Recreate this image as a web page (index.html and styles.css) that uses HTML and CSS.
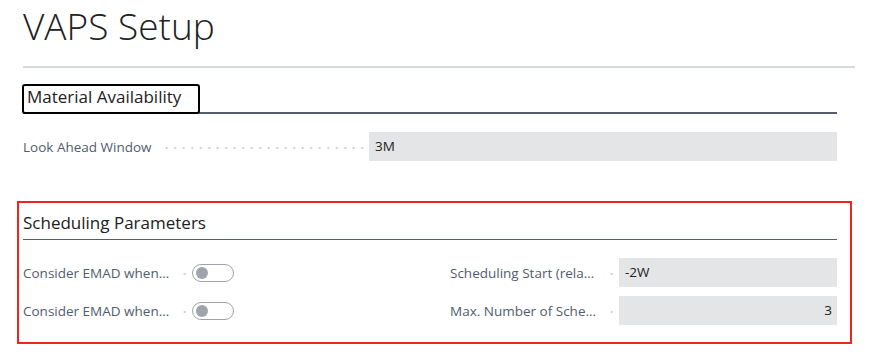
FILE: index.html
```html
<!DOCTYPE html>
<html lang="en">
<head>
  <meta charset="UTF-8" />
  <meta name="viewport" content="width=device-width, initial-scale=1.0"/>
  <title>VAPS Setup</title>
  <link rel="stylesheet" href="styles.css">
</head>
<body>

  <div class="page">
    <h1 class="page-title">VAPS Setup</h1>

    <div class="form">
      <section class="group">
        <div class="group-head thick">
          <span class="group-title focused">Material Availability</span>
        </div>
        <div class="field wide">
          <div class="caption">
            <label>Look Ahead Window</label>
            <span class="leader"></span>
          </div>
          <div class="input">3M</div>
        </div>
      </section>

      <section class="group marked">
        <div class="group-head">
          <span class="group-title">Scheduling Parameters</span>
        </div>
        <div class="cols">
          <div class="col">
            <div class="field">
              <div class="caption">
                <label>Consider EMAD when scheduling</label>
                <span class="leader"></span>
              </div>
              <div class="toggle"><span class="knob"></span></div>
            </div>
            <div class="field">
              <div class="caption">
                <label>Consider EMAD when rescheduling</label>
                <span class="leader"></span>
              </div>
              <div class="toggle"><span class="knob"></span></div>
            </div>
          </div>
          <div class="col">
            <div class="field">
              <div class="caption">
                <label>Scheduling Start (relative to today)</label>
                <span class="leader"></span>
              </div>
              <div class="input">-2W</div>
            </div>
            <div class="field">
              <div class="caption">
                <label>Max. Number of Scheduling Runs</label>
                <span class="leader"></span>
              </div>
              <div class="input number">3</div>
            </div>
          </div>
        </div>
      </section>
    </div>
  </div>

</body>
</html>
```

FILE: styles.css
```css
body {
  margin: 0;
  background-color: #ffffff;
  font-family: "Open Sans", "Noto Sans", sans-serif;
  color: #212121;
}

.page {
  padding: 0 14px 0 23px;
}

.page-title {
  margin: 0;
  font-size: 37px;
  font-weight: 300;
  line-height: 52px;
  padding-bottom: 14px;
  border-bottom: 2px solid #d6d9dd;
}

.form {
  margin-right: 18px;
  padding-top: 16px;
}

.group-head {
  display: flex;
  border-bottom: 1px solid #555d6b;
  padding-bottom: 4px;
}

.group-head.thick {
  border-bottom: 2px solid #555d6b;
  padding-bottom: 0;
}

.group-title {
  font-size: 17px;
  line-height: 24px;
  color: #212121;
}

.focused {
  line-height: 22px;
  padding: 0 17px 4px 3px;
  margin: 0 0 -2px -1px;
  border: 2px solid #000000;
  border-radius: 3px;
}

.field {
  display: flex;
  align-items: center;
  height: 29px;
  margin-top: 18px;
}

.col .field + .field {
  margin-top: 9px;
}

.caption {
  display: flex;
  align-items: center;
  width: 169px;
  flex-shrink: 0;
}

.wide .caption {
  width: 346px;
}

.caption label {
  font-size: 13.5px;
  color: #505c6d;
  white-space: nowrap;
  overflow: hidden;
  text-overflow: ellipsis;
  max-width: calc(100% - 22px);
}

.leader {
  flex: 1;
  height: 4px;
  margin: 2px 3px 0 8px;
  background-image: radial-gradient(circle, #c6cad0 0.9px, transparent 1.2px);
  background-size: 8.5px 4px;
  background-position: right center;
  background-repeat: repeat-x;
}

.input {
  flex: 1;
  height: 29px;
  line-height: 29px;
  padding: 0 6px;
  background-color: #e4e5e7;
  font-size: 13.5px;
  color: #212121;
}

.input.number {
  text-align: right;
  padding-right: 5px;
}

.toggle {
  position: relative;
  width: 40px;
  height: 16px;
  border: 1px solid #9fa3ac;
  border-radius: 9px;
}

.knob {
  position: absolute;
  left: 3px;
  top: 2px;
  width: 12px;
  height: 12px;
  border-radius: 50%;
  background-color: #a0a4ad;
}

.group.marked {
  margin: 40px -15px 0 -6px;
  padding: 8px 13px 17px 4px;
  border: 2px solid #f0261a;
}

.cols {
  display: grid;
  grid-template-columns: 1fr 1fr;
  column-gap: 40px;
}
```
